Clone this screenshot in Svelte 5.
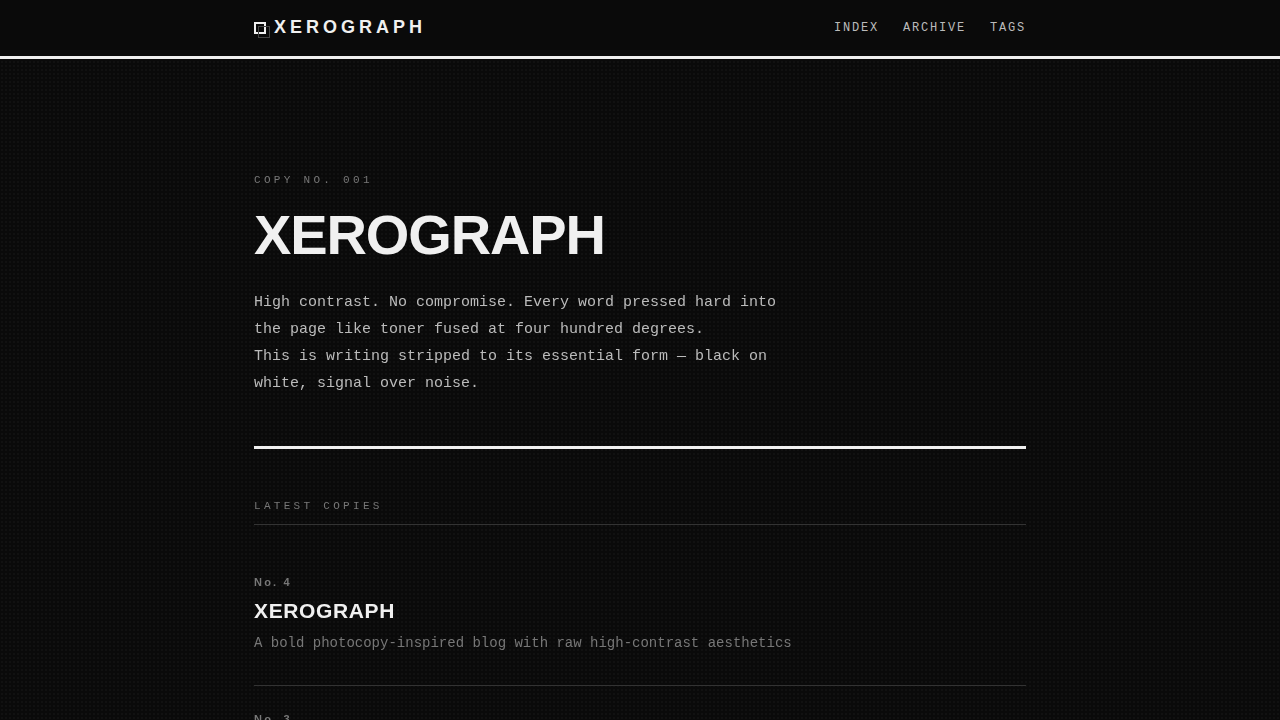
<script lang="ts">
  interface Post {
    no: number;
    title?: string;
    description?: string;
  }

  const links = [
    { label: "Index", href: "#index" },
    { label: "Archive", href: "#archive" },
    { label: "Tags", href: "#tags" },
  ];

  const posts: Post[] = [
    {
      no: 4,
      title: "XEROGRAPH",
      description: "A bold photocopy-inspired blog with raw high-contrast aesthetics",
    },
    { no: 3 },
  ];
</script>

<header class="site-header">
  <div class="wrap bar">
    <a class="logo" href="#index"><span class="mark"></span>XEROGRAPH</a>
    <nav>
      {#each links as link}
        <a href={link.href}>{link.label}</a>
      {/each}
    </nav>
  </div>
</header>

<main class="wrap">
  <section class="hero">
    <p class="label">Copy No. 001</p>
    <h1>XEROGRAPH</h1>
    <p class="intro">
      High contrast. No compromise. Every word pressed hard into the page like
      toner fused at four hundred degrees.<br />
      This is writing stripped to its essential form — black on white, signal
      over noise.
    </p>
  </section>

  <section class="latest">
    <h2 class="label">Latest Copies</h2>
    {#each posts as post}
      <article>
        <span class="number">No. {post.no}</span>
        {#if post.title}
          <h3><a href="#post-{post.no}">{post.title}</a></h3>
          <p>{post.description}</p>
        {/if}
      </article>
    {/each}
  </section>
</main>

<style>
  :global(html) {
    background: #0a0a0a;
    scrollbar-width: none;
  }

  :global(body) {
    margin: 0;
    color: #f0f0f0;
    font-family: "Liberation Mono", "Courier New", monospace;
  }

  /* halftone dots */
  :global(body::before) {
    content: "";
    position: fixed;
    inset: 0;
    background: radial-gradient(circle, #111 1px, transparent 1px) 0 0 / 4px 4px;
    pointer-events: none;
  }

  a {
    color: inherit;
    text-decoration: none;
  }

  h1, h2, h3, p {
    margin: 0;
  }

  .wrap {
    box-sizing: border-box;
    max-width: 820px;
    margin: 0 auto;
    padding: 0 24px;
  }

  main {
    position: relative;
    z-index: 1;
  }

  .site-header {
    position: sticky;
    top: 0;
    z-index: 10;
    background: #0a0a0a;
    border-bottom: 3px solid #f0f0f0;
  }

  .bar {
    display: flex;
    align-items: center;
    justify-content: space-between;
    height: 56px;
  }

  .logo {
    padding-bottom: 2px;
    font: bold 18px/28px "Liberation Sans", Arial, sans-serif;
    letter-spacing: 4px;
  }

  .mark {
    position: relative;
    display: inline-block;
    box-sizing: border-box;
    width: 12px;
    height: 12px;
    margin-right: 8px;
    border: 2px solid #f0f0f0;
    vertical-align: -1px;
  }

  /* the offset ghost copy */
  .mark::after {
    content: "";
    position: absolute;
    top: 2px;
    left: 2px;
    width: 10px;
    height: 10px;
    border: 1px solid #444;
  }

  nav {
    display: flex;
    gap: 24px;
    font-size: 12px;
    letter-spacing: 0.15em;
    text-transform: uppercase;
    color: #bbb;
  }

  .hero {
    padding: 112px 0 49px;
    border-bottom: 3px solid #f0f0f0;
  }

  .label {
    font-size: 11px;
    font-weight: normal;
    line-height: 18px;
    letter-spacing: 0.3em;
    text-transform: uppercase;
    color: #777;
  }

  h1 {
    margin: 18px 0 26px;
    font: bold 56px/56px "Liberation Sans", Arial, sans-serif;
    letter-spacing: -0.02em;
  }

  .intro {
    max-width: 550px;
    font-size: 15px;
    line-height: 27px;
    color: #bbb;
  }

  .latest {
    padding-top: 48px;
  }

  .latest .label {
    padding-bottom: 9px;
    margin-bottom: 24px;
    border-bottom: 1px solid #333;
  }

  article {
    padding: 24px 0 30px;
    border-bottom: 1px solid #333;
  }

  .number {
    display: block;
    font: bold 11px/18px "Liberation Sans", Arial, sans-serif;
    letter-spacing: 0.2em;
    color: #777;
  }

  h3 {
    margin: 6px 0;
    font: bold 21px/28px "Liberation Sans", Arial, sans-serif;
    letter-spacing: 0.03em;
  }

  article p {
    font-size: 14px;
    line-height: 24px;
    color: #777;
  }
</style>
